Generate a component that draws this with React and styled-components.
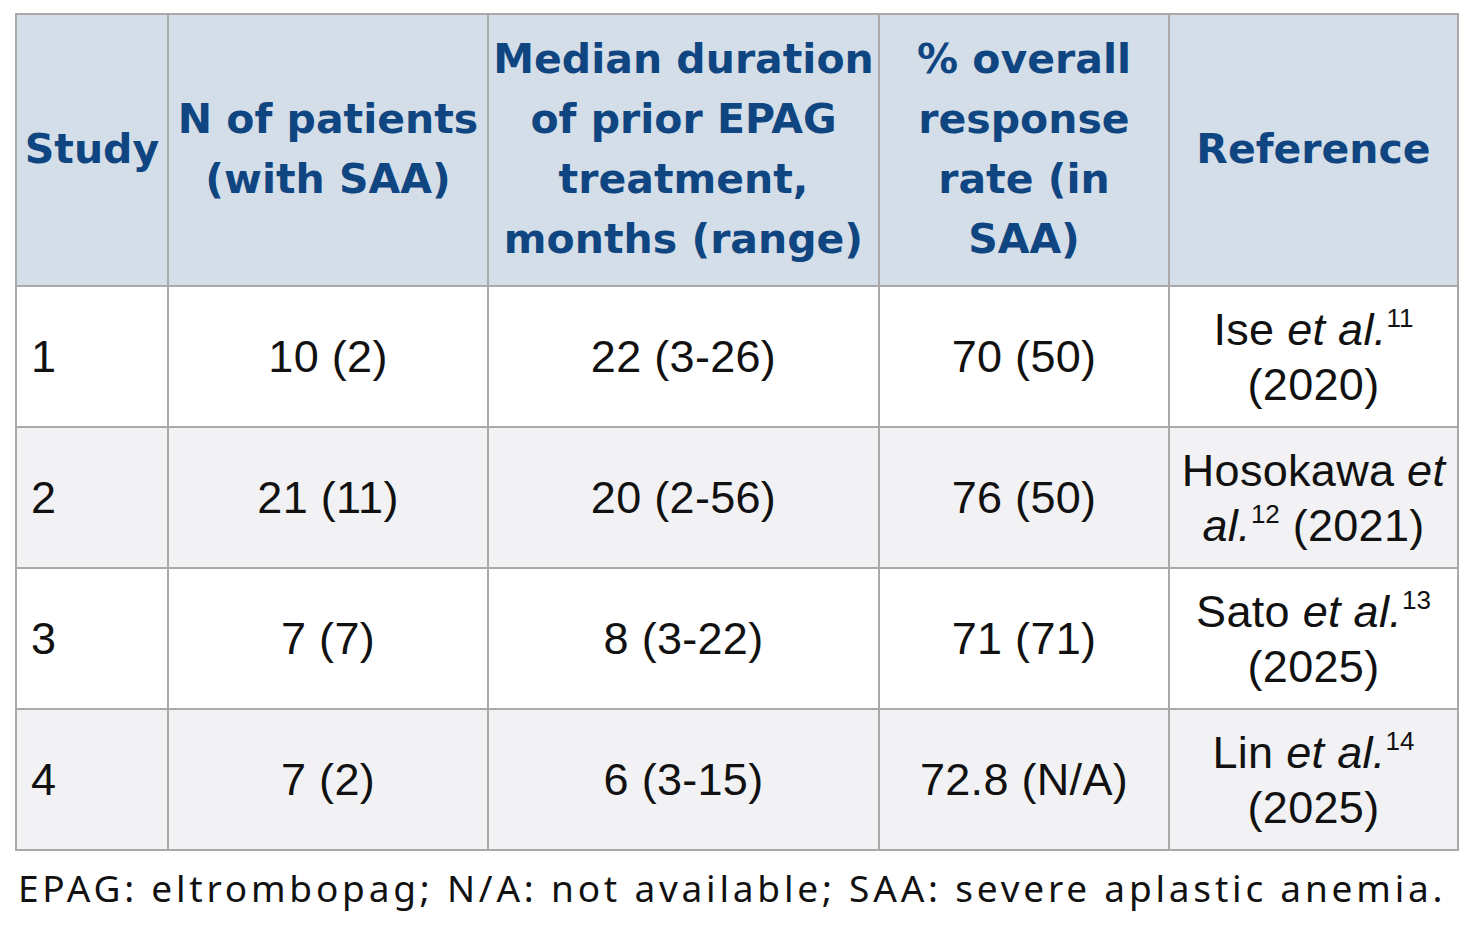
import React from 'react';
import styled, { createGlobalStyle } from 'styled-components';

const GlobalStyle = createGlobalStyle`
  html, body {
    margin: 0;
    padding: 0;
    background: #ffffff;
  }
`;

// Filas del estudio
const studies = [
    { id: 1, n: '10 (2)', duration: '22 (3-26)', response: '70 (50)', author: 'Ise', ref: '11', year: '2020', split: 'year' },
    { id: 2, n: '21 (11)', duration: '20 (2-56)', response: '76 (50)', author: 'Hosokawa', ref: '12', year: '2021', split: 'et' },
    { id: 3, n: '7 (7)', duration: '8 (3-22)', response: '71 (71)', author: 'Sato', ref: '13', year: '2025', split: 'year' },
    { id: 4, n: '7 (2)', duration: '6 (3-15)', response: '72.8 (N/A)', author: 'Lin', ref: '14', year: '2025', split: 'year' },
];

const Page = styled.div`
  padding: 13px 0 0 15px;
  width: 1444px;
`;

const Table = styled.table`
  border-collapse: collapse;
  table-layout: fixed;
  width: 1442px;
  border: 2px solid #a9a9a9;
`;

const HeadCell = styled.th`
  background: #d4dee8;
  color: #0f4581;
  font-family: 'DejaVu Sans', sans-serif;
  font-weight: bold;
  font-size: 41px;
  line-height: 60px;
  text-align: center;
  vertical-align: middle;
  padding: 14px 0 16px;
  border: 2px solid #a9a9a9;
`;

const Row = styled.tr`
  background: ${(p) => (p.$shaded ? '#f2f2f4' : '#ffffff')};
  height: 141px;
`;

const Cell = styled.td`
  color: #111111;
  font-family: 'Liberation Sans', Arial, sans-serif;
  font-size: 45px;
  line-height: 55px;
  letter-spacing: 0.3px;
  text-align: ${(p) => (p.$left ? 'left' : 'center')};
  padding: 0 ${(p) => (p.$left ? '14px' : '4px')};
  vertical-align: middle;
  border: 2px solid #a9a9a9;
`;

const Sup = styled.sup`
  font-size: 26px;
  line-height: 0;
  vertical-align: 18px;
  letter-spacing: 0;
`;

const Note = styled.p`
  margin: 13px 0 0 3px;
  font-family: 'Noto Sans', 'Open Sans', sans-serif;
  font-size: 37px;
  line-height: 48px;
  letter-spacing: 3.8px;
  color: #111111;
  white-space: nowrap;
`;

const Reference = ({ author, refNum, year, split }) =>
    split === 'et' ? (
        <>
            {author} <em>et</em>
            <br />
            <em>al.</em>
            <Sup>{refNum}</Sup> ({year})
        </>
    ) : (
        <>
            {author} <em>et al.</em>
            <Sup>{refNum}</Sup>
            <br />({year})
        </>
    );

const App = () => {
    return (
        <Page>
            <GlobalStyle />
            <Table>
                <colgroup>
                    <col style={{ width: '152px' }} />
                    <col style={{ width: '320px' }} />
                    <col style={{ width: '391px' }} />
                    <col style={{ width: '290px' }} />
                    <col style={{ width: '289px' }} />
                </colgroup>
                <thead>
                    <tr>
                        <HeadCell>Study</HeadCell>
                        <HeadCell>
                            N of patients
                            <br />
                            (with SAA)
                        </HeadCell>
                        <HeadCell>
                            Median duration
                            <br />
                            of prior EPAG
                            <br />
                            treatment,
                            <br />
                            months (range)
                        </HeadCell>
                        <HeadCell>
                            % overall
                            <br />
                            response
                            <br />
                            rate (in
                            <br />
                            SAA)
                        </HeadCell>
                        <HeadCell>Reference</HeadCell>
                    </tr>
                </thead>
                <tbody>
                    {studies.map((s, i) => (
                        <Row key={s.id} $shaded={i % 2 === 1}>
                            <Cell $left>{s.id}</Cell>
                            <Cell>{s.n}</Cell>
                            <Cell>{s.duration}</Cell>
                            <Cell>{s.response}</Cell>
                            <Cell>
                                <Reference author={s.author} refNum={s.ref} year={s.year} split={s.split} />
                            </Cell>
                        </Row>
                    ))}
                </tbody>
            </Table>
            <Note>EPAG: eltrombopag; N/A: not available; SAA: severe aplastic anemia.</Note>
        </Page>
    );
};

export default App;
